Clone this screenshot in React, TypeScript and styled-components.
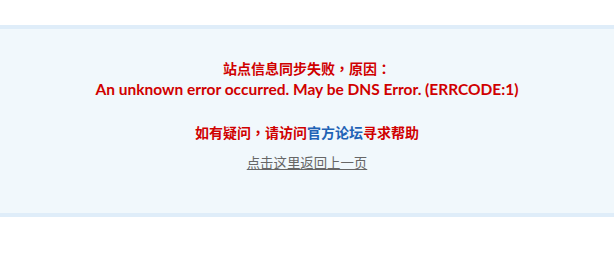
import React from "react";
import styled, { createGlobalStyle } from "styled-components";

const Global = createGlobalStyle`
  html, body { margin: 0; padding: 0; background: #ffffff; }
  body { font-family: "Lato", "Noto Sans CJK SC", sans-serif; }
`;

const Page = styled.div`
  padding-top: 25px;
`;

const Panel = styled.div`
  background: #f1f8fc;
  border-top: 4px solid #dfedf9;
  border-bottom: 4px solid #dfedf9;
  padding: 29px 0 41px;
  text-align: center;
`;

const Title = styled.p`
  margin: 0;
  color: #d00000;
  font-weight: bold;
  font-size: 14px;
  line-height: 20px;
  font-family: "Noto Sans CJK SC", sans-serif;
`;

const Reason = styled.p`
  margin: 0;
  color: #d00000;
  font-weight: bold;
  font-size: 15.5px;
  line-height: 22px;
  font-family: "Lato", "Noto Sans CJK SC", sans-serif;
`;

const Help = styled.p`
  margin: 22px 0 0;
  color: #d00000;
  font-weight: bold;
  font-size: 14px;
  line-height: 20px;
  font-family: "Noto Sans CJK SC", sans-serif;
`;

const Punct = styled.span`
  font-family: "Noto Sans CJK TC", "Noto Sans CJK SC", sans-serif;
`;

const ForumLink = styled.a`
  color: #1f63b6;
  text-decoration: none;
`;

const BackRow = styled.p`
  margin: 10px 0 0;
  font-size: 13.4px;
  line-height: 20px;
  font-family: "Noto Sans CJK SC", sans-serif;
`;

const BackLink = styled.a`
  color: #666666;
  text-decoration: underline;
`;

export default function App() {
  return (
    <>
      <Global />
      <Page>
        <Panel>
          <Title>
            站点信息同步失败<Punct>，</Punct>原因<Punct>：</Punct>
          </Title>
          <Reason>An unknown error occurred. May be DNS Error. (ERRCODE:1)</Reason>
          <Help>
            如有疑问<Punct>，</Punct>请访问<ForumLink href="#">官方论坛</ForumLink>寻求帮助
          </Help>
          <BackRow>
            <BackLink href="#">点击这里返回上一页</BackLink>
          </BackRow>
        </Panel>
      </Page>
    </>
  );
}
